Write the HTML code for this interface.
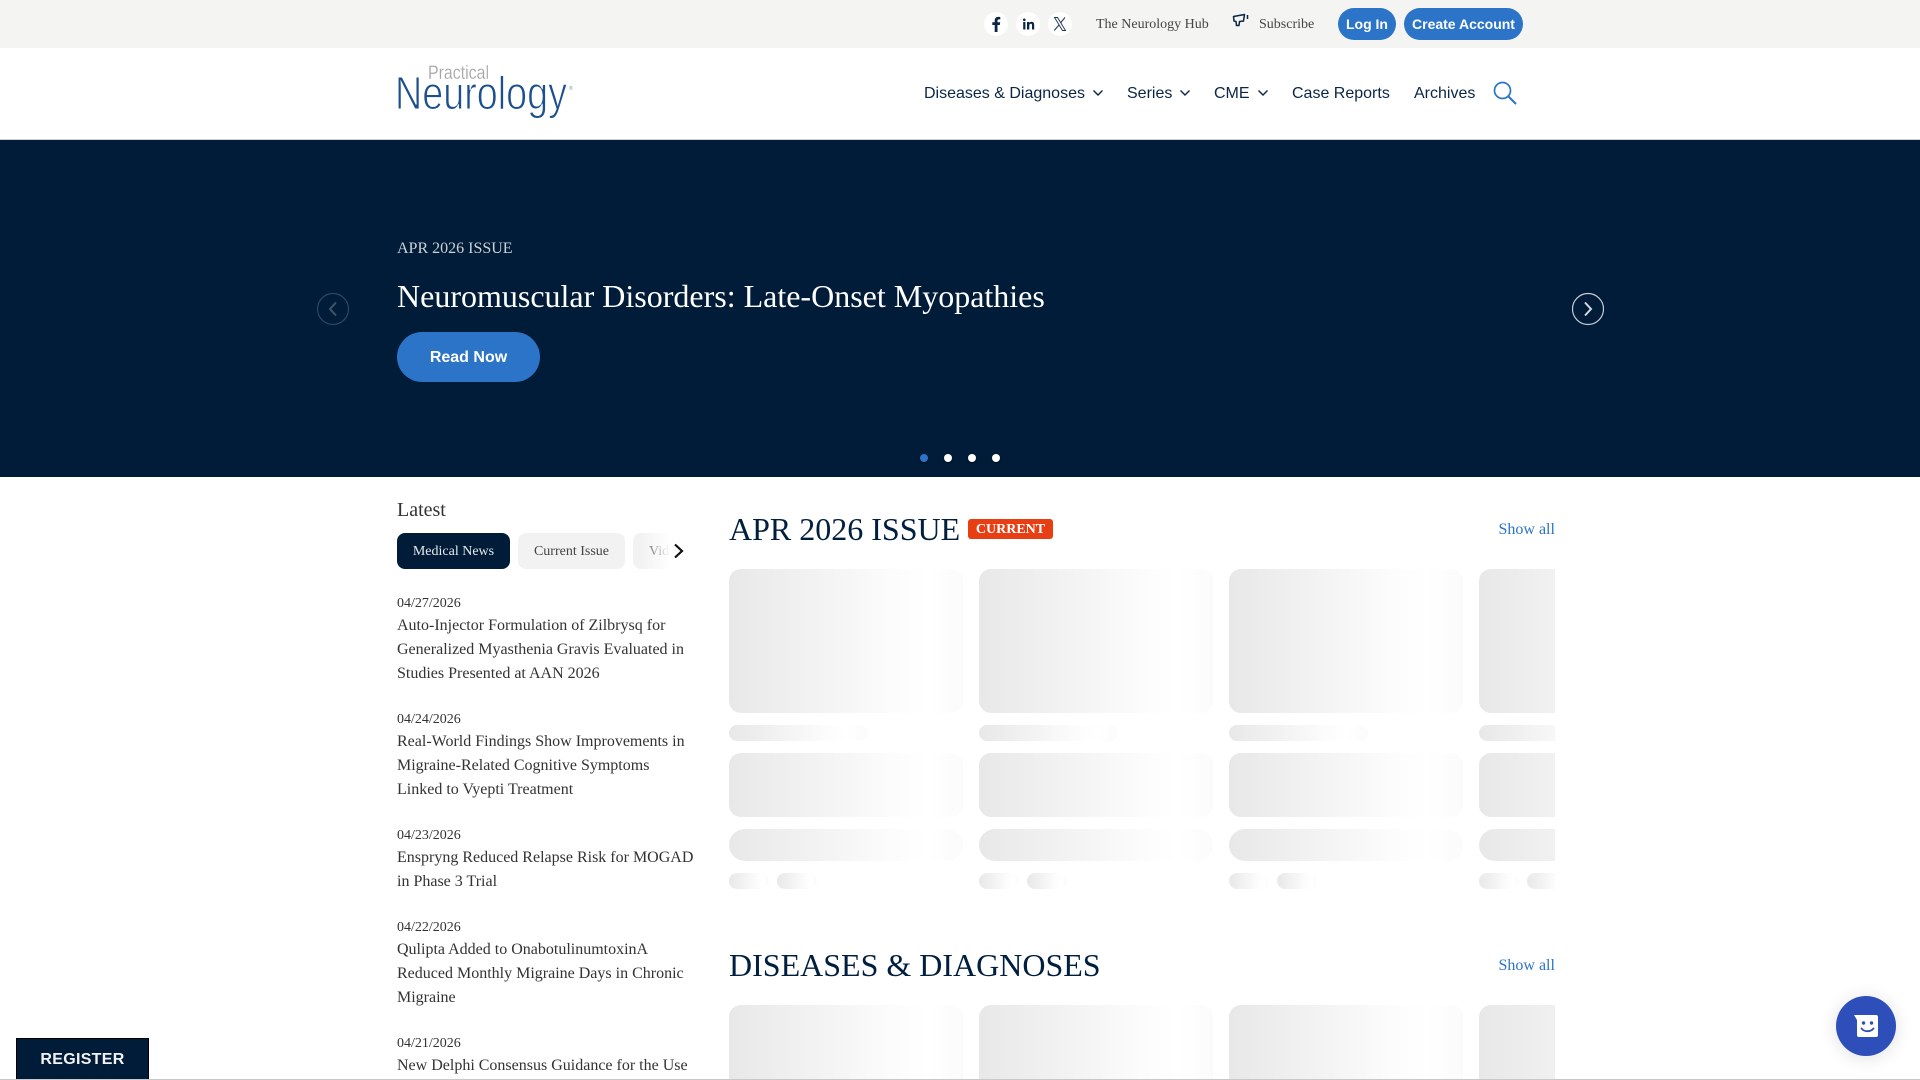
<!DOCTYPE html>
<html lang="en"><head><meta charset="utf-8"><title>Practical Neurology</title>
<style>
*{box-sizing:border-box;margin:0;padding:0}
html,body{width:1920px;height:1080px;overflow:hidden;background:#fff}
body{position:relative;font-family:"Liberation Serif",serif;color:#333}
.a{position:absolute;white-space:nowrap}
.sans{font-family:"Liberation Sans",sans-serif}
.nav{top:84px;font:16px/19px "Liberation Sans",sans-serif;color:#0b2545}
.soc{top:12px;width:24px;height:24px;border-radius:50%;background:#fff}
.soc svg{display:block;width:24px;height:24px}
.pill{top:8px;height:32px;border-radius:16px;background:#2b74c8;color:#fff;font:bold 14px/32px "Liberation Sans",sans-serif;text-align:center}
.dot{top:454px;width:8px;height:8px;border-radius:50%;background:#fff;box-shadow:0 1px 2px rgba(0,0,0,.5)}
.tab{top:533px;height:36px;border-radius:8px;font-size:14px;line-height:38px;text-align:center;background:#f2f2f2;color:#444}
.date{left:397px;font-size:14px;line-height:20px;color:#333}
.tt{left:397px;width:300px;font-size:16px;line-height:24px;color:#333;white-space:normal}
h2{position:absolute;left:729px;font-weight:400;font-size:32px;line-height:40px;color:#001f3f;white-space:nowrap}
.show{left:1498.500px;font-size:16px;line-height:20px;color:#2b74c8}
.clip{position:absolute;left:729px;width:826px;overflow:hidden}
.s{position:absolute;background:linear-gradient(90deg,#e8e8e8 0%,#f6f6f6 50%,#fcfcfc 70%,#fff 85%,#fbfbfb 100%)}
</style></head><body>

<div class="a" style="left:0;top:0;width:1920px;height:48px;background:#f4f4f3"></div>
<div class="a soc" style="left:984px"><svg viewBox="0 0 24 24"><path fill="#0b2545" d="M13.500 20v-7h2.300l.4-2.700h-2.700V8.700c0-.8.300-1.300 1.300-1.300H16.300V5c-.3 0-1.100-.1-2-.1-2.200 0-3.600 1.300-3.600 3.600v1.800H8.300V13h2.400v7z"/></svg></div>
<div class="a soc" style="left:1016px"><svg viewBox="0 0 24 24"><path fill="#0b2545" d="M7.200 10h2.200v7.500H7.200zM8.300 6.500a1.300 1.300 0 1 1 0 2.600 1.300 1.300 0 0 1 0-2.600zM11 10h2.100v1c.4-.7 1.200-1.200 2.300-1.200 2.200 0 2.800 1.400 2.800 3.400v4.300H16v-3.800c0-1 0-2-1.200-2s-1.500.9-1.500 1.900v3.900H11z"/></svg></div>
<div class="a soc" style="left:1048px"><svg viewBox="0 0 24 24"><path fill="none" stroke="#1d3350" stroke-width=".9" d="M6.500 5.500h3l8 13h-3z"/><path fill="none" stroke="#1d3350" stroke-width="1" d="M17 5.500l-4.600 5.500M11 13l-4.800 5.500"/></svg></div>
<div class="a" style="left:1096px;top:17px;font-size:14px;line-height:16px;color:#444">The Neurology Hub</div>
<svg class="a" style="left:1232px;top:13px" width="17" height="15" viewBox="0 0 17 15"><path fill="none" stroke="#0b2545" stroke-width="1.500" stroke-linejoin="round" d="M1.500 3.500 12.500 1.500 11.500 8 7.500 8.500 7 12.500 4.500 12.500 4 8.500 2 8z"/><path stroke="#0b2545" stroke-width="1.500" d="M15.500 2v4"/></svg>
<div class="a" style="left:1259px;top:17px;font-size:14px;line-height:16px;color:#444">Subscribe</div>
<div class="a pill" style="left:1338px;width:58px">Log In</div>
<div class="a pill" style="left:1404px;width:119px">Create Account</div>

<div class="a" style="left:0;top:139px;width:1920px;height:1px;background:#d0d0d0"></div>
<svg class="a" style="left:380px;top:50px" width="220" height="88" viewBox="0 0 220 88">
<text x="48" y="29" font-family="Liberation Sans" font-size="19" fill="#a3a3a3" stroke="#fff" stroke-width=".2" textLength="61" lengthAdjust="spacingAndGlyphs">Practical</text>
<text x="15" y="59" font-family="Liberation Sans" font-size="46" fill="#1b4f8e" stroke="#fff" stroke-width="1.100" textLength="172" lengthAdjust="spacingAndGlyphs">Neurology</text>
<text x="189" y="40" font-family="Liberation Sans" font-size="5" fill="#6f8fb5">®</text>
</svg>
<div class="a nav" style="left:924px">Diseases &amp; Diagnoses</div>
<svg class="a" style="left:1092px;top:89px" width="12" height="8" viewBox="0 0 12 8"><path fill="none" stroke="#0b2545" stroke-width="1.400" d="M1.500 1.500 6 6l4.500-4.500"/></svg>
<div class="a nav" style="left:1127px">Series</div>
<svg class="a" style="left:1179px;top:89px" width="12" height="8" viewBox="0 0 12 8"><path fill="none" stroke="#0b2545" stroke-width="1.400" d="M1.500 1.500 6 6l4.500-4.500"/></svg>
<div class="a nav" style="left:1214px">CME</div>
<svg class="a" style="left:1257px;top:89px" width="12" height="8" viewBox="0 0 12 8"><path fill="none" stroke="#0b2545" stroke-width="1.400" d="M1.500 1.500 6 6l4.500-4.500"/></svg>
<div class="a nav" style="left:1292px">Case Reports</div>
<div class="a nav" style="left:1414px">Archives</div>
<svg class="a" style="left:1493px;top:81px" width="24" height="24" viewBox="0 0 24 24"><circle cx="9.500" cy="9.500" r="8" fill="none" stroke="#2b74c8" stroke-width="1.700"/><path stroke="#2b74c8" stroke-width="2" d="M15 15l8 8"/></svg>

<div class="a" style="left:0;top:140px;width:1920px;height:337px;background:#001c38"></div>
<svg class="a" style="left:316px;top:292px" width="34" height="34" viewBox="0 0 34 34"><circle cx="17" cy="17" r="15.500" fill="none" stroke="#2f4660" stroke-width="1.200"/><path fill="none" stroke="#3f566f" stroke-width="2" d="M20 10.500 14 17l6 6.500"/></svg>
<svg class="a" style="left:1571px;top:292px" width="34" height="34" viewBox="0 0 34 34"><circle cx="17" cy="17" r="15.500" fill="none" stroke="#c5ccd4" stroke-width="1.200"/><path fill="none" stroke="#d5dae0" stroke-width="2" d="M14 10.500 20 17l-6 6.500"/></svg>
<div class="a" style="left:397px;top:239px;font-size:16px;line-height:20px;color:#ccd2d9">APR 2026 ISSUE</div>
<div class="a" style="left:397px;top:276px;font-size:32px;line-height:40px;color:#fff">Neuromuscular Disorders: Late-Onset Myopathies</div>
<div class="a sans" style="left:397px;top:332px;width:143px;height:50px;border-radius:25px;background:#2b74c8;color:#fff;font-weight:bold;font-size:16px;line-height:52px;text-align:center">Read Now</div>
<div class="a dot" style="left:920px;background:#2b74c8"></div>
<div class="a dot" style="left:944px"></div>
<div class="a dot" style="left:968px"></div>
<div class="a dot" style="left:992px"></div>

<div class="a" style="left:397px;top:498px;font-size:20px;line-height:24px;color:#333">Latest</div>
<div class="a tab" style="left:397px;width:113px;background:#001c38;color:#e6eaee">Medical News</div>
<div class="a tab" style="left:518px;width:107px">Current Issue</div>
<div class="a tab" style="left:633px;width:60px;text-align:left;padding-left:16px">Video</div>
<div class="a" style="left:640px;top:530px;width:60px;height:42px;background:linear-gradient(90deg,rgba(255,255,255,0) 0,#fff 50%)"></div>
<svg class="a" style="left:672px;top:543px" width="14" height="16" viewBox="0 0 14 16"><path fill="none" stroke="#111" stroke-width="2.200" d="M3 1.500 10 8l-7 6.500"/></svg>

<div class="a date" style="top:594px">04/27/2026</div>
<div class="a tt" style="top:614px">Auto-Injector Formulation of Zilbrysq for Generalized Myasthenia Gravis Evaluated in Studies Presented at AAN 2026</div>
<div class="a date" style="top:710px">04/24/2026</div>
<div class="a tt" style="top:730px">Real-World Findings Show Improvements in Migraine-Related Cognitive Symptoms Linked to Vyepti Treatment</div>
<div class="a date" style="top:826px">04/23/2026</div>
<div class="a tt" style="top:846px">Enspryng Reduced Relapse Risk for MOGAD in Phase 3 Trial</div>
<div class="a date" style="top:918px">04/22/2026</div>
<div class="a tt" style="top:938px">Qulipta Added to OnabotulinumtoxinA Reduced Monthly Migraine Days in Chronic Migraine</div>
<div class="a date" style="top:1034px">04/21/2026</div>
<div class="a tt" style="top:1054px">New Delphi Consensus Guidance for the Use</div>

<h2 style="top:509px">APR 2026 ISSUE</h2>
<div class="a" style="left:968px;top:519px;width:85px;height:20px;border-radius:3px;background:#e83e14;color:#fff;font-weight:bold;font-size:14px;line-height:21px;text-align:center">CURRENT</div>
<div class="a show" style="top:520px">Show all</div>
<h2 style="top:945px">DISEASES &amp; DIAGNOSES</h2>
<div class="a show" style="top:956px">Show all</div>

<div class="clip" style="top:569px;height:320px">
<div class="s" style="left:0;top:0;width:234px;height:144px;border-radius:12px"></div>
<div class="s" style="left:0;top:156px;width:139px;height:16px;border-radius:8px"></div>
<div class="s" style="left:0;top:184px;width:234px;height:64px;border-radius:12px"></div>
<div class="s" style="left:0;top:260px;width:234px;height:32px;border-radius:16px"></div>
<div class="s" style="left:0;top:304px;width:40px;height:16px;border-radius:8px"></div>
<div class="s" style="left:48px;top:304px;width:40px;height:16px;border-radius:8px"></div>

<div class="s" style="left:250px;top:0;width:234px;height:144px;border-radius:12px"></div>
<div class="s" style="left:250px;top:156px;width:139px;height:16px;border-radius:8px"></div>
<div class="s" style="left:250px;top:184px;width:234px;height:64px;border-radius:12px"></div>
<div class="s" style="left:250px;top:260px;width:234px;height:32px;border-radius:16px"></div>
<div class="s" style="left:250px;top:304px;width:40px;height:16px;border-radius:8px"></div>
<div class="s" style="left:298px;top:304px;width:40px;height:16px;border-radius:8px"></div>

<div class="s" style="left:500px;top:0;width:234px;height:144px;border-radius:12px"></div>
<div class="s" style="left:500px;top:156px;width:139px;height:16px;border-radius:8px"></div>
<div class="s" style="left:500px;top:184px;width:234px;height:64px;border-radius:12px"></div>
<div class="s" style="left:500px;top:260px;width:234px;height:32px;border-radius:16px"></div>
<div class="s" style="left:500px;top:304px;width:40px;height:16px;border-radius:8px"></div>
<div class="s" style="left:548px;top:304px;width:40px;height:16px;border-radius:8px"></div>

<div class="s" style="left:750px;top:0;width:234px;height:144px;border-radius:12px"></div>
<div class="s" style="left:750px;top:156px;width:139px;height:16px;border-radius:8px"></div>
<div class="s" style="left:750px;top:184px;width:234px;height:64px;border-radius:12px"></div>
<div class="s" style="left:750px;top:260px;width:234px;height:32px;border-radius:16px"></div>
<div class="s" style="left:750px;top:304px;width:40px;height:16px;border-radius:8px"></div>
<div class="s" style="left:798px;top:304px;width:40px;height:16px;border-radius:8px"></div>
</div>

<div class="clip" style="top:1005px;height:75px">
<div class="s" style="left:0;top:0;width:234px;height:75px;border-radius:12px 12px 0 0"></div>
<div class="s" style="left:250px;top:0;width:234px;height:75px;border-radius:12px 12px 0 0"></div>
<div class="s" style="left:500px;top:0;width:234px;height:75px;border-radius:12px 12px 0 0"></div>
<div class="s" style="left:750px;top:0;width:76px;height:75px;border-radius:12px 0 0 0;background:linear-gradient(90deg,#e8e8e8 0%,#f0f0f0 100%)"></div>
</div>

<div class="a" style="left:0;top:1079px;width:1920px;height:1px;background:#c8c8c8"></div>
<div class="a sans" style="left:16px;top:1038px;width:133px;height:41px;background:#001c38;border:1px solid #000;border-bottom:0;color:#f2f2f2;font-weight:bold;font-size:16px;line-height:41px;text-align:center;letter-spacing:.3px">REGISTER</div>

<div class="a" style="left:1836px;top:996px;width:60px;height:60px;border-radius:50%;background:#2e4fb9;box-shadow:0 2px 18px rgba(0,0,0,.12)"></div>
<svg class="a" style="left:1853px;top:1014px" width="26" height="24" viewBox="0 0 26 24"><path fill="#fff" d="M1 1h22a2 2 0 0 1 2 2v18a2 2 0 0 1-2 2H6a2 2 0 0 1-2-2V6z"/><circle cx="10.500" cy="9" r="1.700" fill="#2e4fb9"/><circle cx="18.500" cy="9" r="1.700" fill="#2e4fb9"/><path fill="none" stroke="#2e4fb9" stroke-width="1.800" stroke-linecap="round" d="M8.500 14.500c2.800 3.600 9 3.600 12 0"/></svg>
</body></html>
